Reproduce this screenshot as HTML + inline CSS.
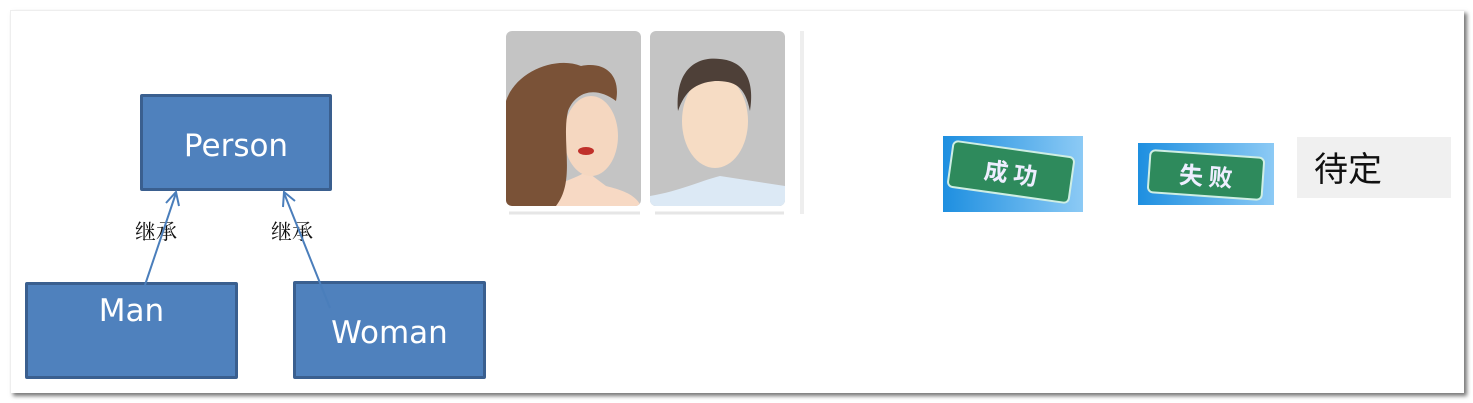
<!DOCTYPE html>
<html><head><meta charset="utf-8"><style>
body{margin:0;width:1473px;height:403px;background:#fff;position:relative;overflow:hidden;font-family:"Liberation Sans","Noto Sans CJK SC",sans-serif}
.card{position:absolute;left:10px;top:10px;width:1453px;height:382px;background:#fff;box-shadow:3px 3px 4px #777;border-top:1px solid #eee;border-left:1px solid #eee}
.box{position:absolute;background:#4f81bd;border:3px solid #3a5f8f;border-radius:2px;color:#fff;font-size:31px;text-align:center;box-sizing:border-box;font-family:"DejaVu Sans","Liberation Sans",sans-serif}
.lbl{position:absolute;font-size:21px;font-family:"Noto Serif CJK SC","Noto Sans CJK SC",serif;color:#111}
.av{position:absolute;background:#c4c4c4;border-radius:6px;overflow:hidden}
.sign{position:absolute;background:linear-gradient(90deg,#1e8fe0,#8ccaf5);overflow:hidden}
.pl{position:absolute;background:#2e8a5c;border:2px solid #cfeee4;color:#eef;font-weight:bold;font-size:24px;text-align:center;font-family:"Noto Sans CJK SC",sans-serif}
</style></head><body>
<div class="card"></div>
<div class="box" style="left:140px;top:94px;width:192px;height:97px;line-height:98px">Person</div>
<div class="box" style="left:25px;top:282px;width:213px;height:97px;line-height:52px">Man</div>
<div class="box" style="left:293px;top:281px;width:193px;height:98px;line-height:98px">Woman</div>
<div class="lbl" style="left:135px;top:216px">继承</div>
<div class="lbl" style="left:271px;top:216px">继承</div>
<svg style="position:absolute;left:0;top:0" width="1473" height="403">
<g stroke="#4a7ebb" stroke-width="2" fill="none">
<line x1="145" y1="285" x2="176" y2="193"/><polyline points="166,203 176,192 179,206"/>
<line x1="330" y1="308" x2="284" y2="193"/><polyline points="283,207 284,192 295,201"/>
</g>
<line x1="802" y1="31" x2="802" y2="214" stroke="#eee" stroke-width="4"/>
<line x1="509" y1="213" x2="640" y2="213" stroke="#e6e6e6" stroke-width="3"/>
<line x1="655" y1="213" x2="784" y2="213" stroke="#e6e6e6" stroke-width="3"/>
</svg>
<div class="av" style="left:506px;top:31px;width:135px;height:175px">
<svg width="135" height="175"><path d="M40 175 C40 150 70 150 80 140 L100 155 C120 160 130 165 135 175Z" fill="#f7d9c4"/><ellipse cx="85" cy="105" rx="27" ry="40" fill="#f5d7c0"/><path d="M0 175 L0 70 C10 40 50 25 75 35 C100 30 115 45 110 70 C90 55 70 60 62 80 C55 110 70 150 50 175Z" fill="#7a5237"/><ellipse cx="80" cy="120" rx="8" ry="4" fill="#c0302a"/></svg></div>
<div class="av" style="left:650px;top:31px;width:135px;height:175px">
<svg width="135" height="175"><path d="M0 175 L0 165 C30 160 50 150 70 145 L135 155 L135 175Z" fill="#dce9f5"/><ellipse cx="65" cy="90" rx="33" ry="47" fill="#f6dcc4"/><path d="M28 80 C25 40 45 25 70 28 C95 30 105 50 100 80 C95 55 85 50 65 50 C45 52 35 60 28 80Z" fill="#4e4038"/></svg></div>
<div class="sign" style="left:943px;top:136px;width:140px;height:76px"><div class="pl" style="left:6px;top:12px;width:120px;height:44px;line-height:44px;transform:rotate(8deg);border-radius:6px">成 功</div></div>
<div class="sign" style="left:1138px;top:143px;width:136px;height:62px"><div class="pl" style="left:10px;top:10px;width:112px;height:40px;line-height:40px;transform:rotate(4deg);border-radius:6px">失 败</div></div>
<div style="position:absolute;left:1297px;top:137px;width:154px;height:61px;background:#f0f0f0;font-size:34px;line-height:60px;padding-left:17px;box-sizing:border-box;font-family:'Noto Sans CJK SC',sans-serif;color:#111">待定</div>
</body></html>
